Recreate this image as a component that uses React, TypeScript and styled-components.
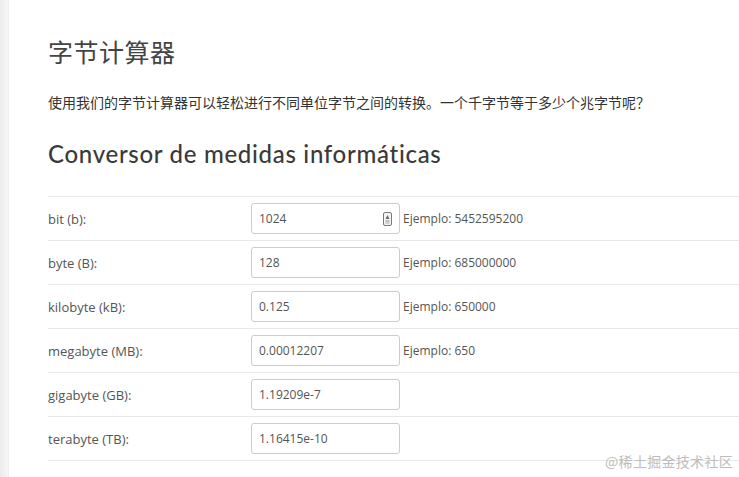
import React from "react";
import styled, { createGlobalStyle } from "styled-components";

const Global = createGlobalStyle`
  html, body { margin: 0; padding: 0; background: #fff; overflow: hidden; }
  body { width: 739px; height: 477px; }
`;

const Page = styled.div`
  display: flex;
  height: 477px;
  position: relative;
  overflow: hidden;
`;

const Strip = styled.div`
  width: 8px;
  flex: none;
  background: linear-gradient(to right, #ececec, #f6f6f6);
  border-right: 1px solid #f0f0f0;
`;

const Main = styled.main`
  flex: 1;
  padding: 35px 0 0 39px;
  background: #fff;
  min-width: 0;
`;

const Title = styled.h1`
  margin: 0;
  font-family: "Noto Sans CJK SC", serif;
  font-weight: 400;
  font-size: 25px;
  line-height: 32px;
  color: #444;
  letter-spacing: 0.5px;
`;

const Intro = styled.p`
  margin: 25px 0 0;
  font-family: "Noto Sans CJK SC", sans-serif;
  font-size: 14px;
  line-height: 20px;
  color: #333;
`;

const Subtitle = styled.h2`
  margin: 26px 0 0;
  font-family: Lato, "Open Sans", sans-serif;
  font-weight: 500;
  font-size: 24px;
  line-height: 32px;
  color: #3a3a3a;
  letter-spacing: 0.7px;
`;

const Table = styled.div`
  margin-top: 26px;
  width: 760px;
  border-top: 1px solid #e8e8e8;
`;

const Row = styled.div`
  display: grid;
  grid-template-columns: 203px 152px 1fr;
  align-items: center;
  height: 43px;
  border-bottom: 1px solid #e8e8e8;
  font-family: "Open Sans", sans-serif;
  font-size: 12px;
  color: #555;
`;

const Label = styled.div`
  font-size: 13px;
`;

const InputBox = styled.div`
  position: relative;
  width: 149px;
  height: 31px;
  box-sizing: border-box;
  border: 1px solid #ccc;
  border-radius: 3px;
  display: flex;
  align-items: center;
  padding-left: 7px;
  color: #555;
`;

const Spinner = styled.svg`
  position: absolute;
  right: 7px;
  top: 8px;
`;

const Example = styled.div``;

const Watermark = styled.div`
  position: absolute;
  right: 6px;
  bottom: 6px;
  font-family: "Noto Sans CJK SC", sans-serif;
  font-size: 14px;
  color: #bdbdbd;
  letter-spacing: 0.3px;
`;

const rows = [
  { label: "bit (b):", value: "1024", example: "Ejemplo: 5452595200", spin: true },
  { label: "byte (B):", value: "128", example: "Ejemplo: 685000000" },
  { label: "kilobyte (kB):", value: "0.125", example: "Ejemplo: 650000" },
  { label: "megabyte (MB):", value: "0.00012207", example: "Ejemplo: 650" },
  { label: "gigabyte (GB):", value: "1.19209e-7", example: "" },
  { label: "terabyte (TB):", value: "1.16415e-10", example: "" },
];

export default function App() {
  return (
    <Page>
      <Global />
      <Strip />
      <Main>
        <Title>字节计算器</Title>
        <Intro>使用我们的字节计算器可以轻松进行不同单位字节之间的转换。一个千字节等于多少个兆字节呢？</Intro>
        <Subtitle>Conversor de medidas informáticas</Subtitle>
        <Table>
          {rows.map((r) => (
            <Row key={r.label}>
              <Label>{r.label}</Label>
              <InputBox>
                {r.value}
                {r.spin && (
                  <Spinner width="9" height="14" viewBox="0 0 9 14">
                    <rect x="0.5" y="0.5" width="8" height="13" rx="1.5" fill="#f4f4f4" stroke="#777" />
                    <path d="M4.5 3 L6.5 7 L2.5 7 Z" fill="#666" />
                    <rect x="2.5" y="8.5" width="4" height="1" fill="#888" />
                    <rect x="2.5" y="10.5" width="4" height="1" fill="#aaa" />
                  </Spinner>
                )}
              </InputBox>
              <Example>{r.example}</Example>
            </Row>
          ))}
        </Table>
      </Main>
      <Watermark>@稀土掘金技术社区</Watermark>
    </Page>
  );
}
